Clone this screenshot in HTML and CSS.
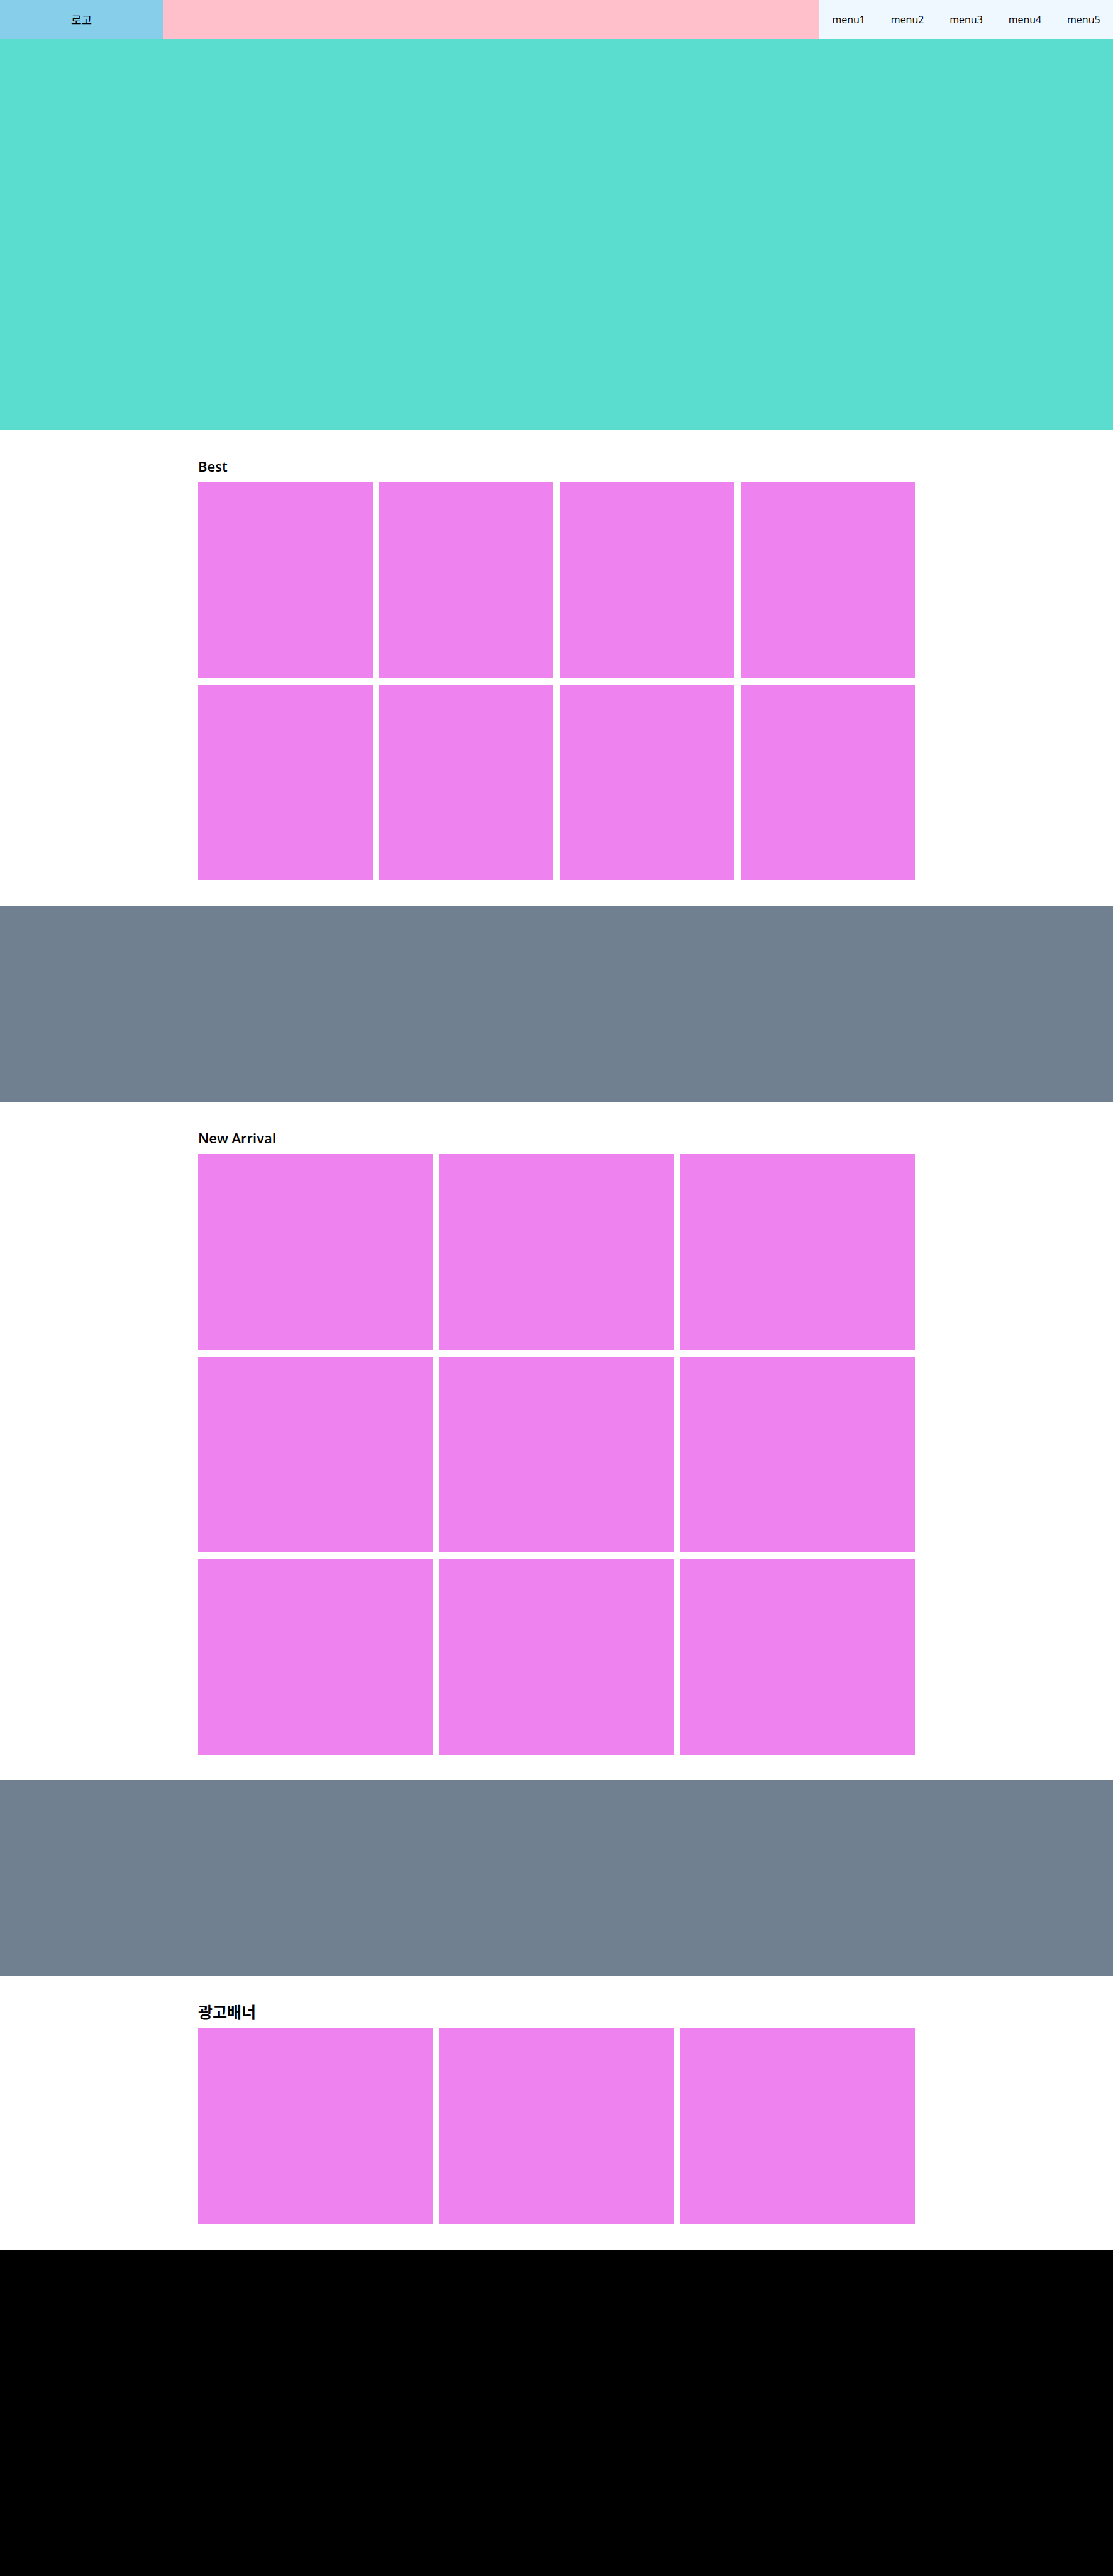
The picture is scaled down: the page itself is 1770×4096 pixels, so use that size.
FILE: index.html
```html
<!DOCTYPE html>
<html lang="ko">
<head>
<meta charset="utf-8">
<meta name="viewport" content="width=device-width, initial-scale=1">
<title>로고</title>
<link rel="stylesheet" href="styles.css">
</head>
<body>
<header class="header">
  <a class="logo" href="#">로고</a>
  <nav class="nav" lang="en">
    <a href="#">menu1</a>
    <a href="#">menu2</a>
    <a href="#">menu3</a>
    <a href="#">menu4</a>
    <a href="#">menu5</a>
  </nav>
</header>
<main>
  <div class="hero"></div>
  <section class="section">
    <h2 class="title" lang="en">Best</h2>
    <div class="grid grid-four">
      <div class="card"></div><div class="card"></div><div class="card"></div><div class="card"></div>
      <div class="card"></div><div class="card"></div><div class="card"></div><div class="card"></div>
    </div>
  </section>
  <div class="banner"></div>
  <section class="section">
    <h2 class="title" lang="en">New Arrival</h2>
    <div class="grid grid-three">
      <div class="card"></div><div class="card"></div><div class="card"></div>
      <div class="card"></div><div class="card"></div><div class="card"></div>
      <div class="card"></div><div class="card"></div><div class="card"></div>
    </div>
  </section>
  <div class="banner"></div>
  <section class="section">
    <h2 class="title title-ko">광고배너</h2>
    <div class="grid grid-three">
      <div class="card"></div><div class="card"></div><div class="card"></div>
    </div>
  </section>
</main>
<footer class="footer"></footer>
</body>
</html>
```
FILE: styles.css
```css
* {
  box-sizing: border-box;
}

body {
  margin: 0;
  background: #fff;
  color: #000;
  font-family: "Open Sans", "Noto Sans CJK KR", sans-serif;
  font-size: 16px;
}

a {
  color: inherit;
  text-decoration: none;
}

.header {
  display: flex;
  justify-content: space-between;
  height: 62px;
  background: pink;
}

.logo {
  display: flex;
  align-items: center;
  justify-content: center;
  width: 259px;
  background: skyblue;
  font-size: 18px;
}

.nav {
  display: flex;
  width: 467px;
  background: aliceblue;
}

.nav a {
  display: flex;
  flex: 1;
  align-items: center;
  justify-content: center;
}

.hero {
  height: 622px;
  background: #5adccf;
}

.section {
  max-width: 1140px;
  margin: 0 auto;
  padding: 41px 0;
}

.title {
  margin: 0 0 9px;
  font-size: 22px;
  font-weight: 600;
  line-height: 33px;
}

.title-ko {
  font-size: 25px;
  font-weight: 700;
}

.grid {
  display: grid;
  gap: 11px 10px;
}

.grid-four {
  grid-template-columns: repeat(4, 1fr);
}

.grid-three {
  grid-template-columns: repeat(3, 1fr);
}

.card {
  height: 311px;
  background: violet;
}

.banner {
  height: 311px;
  background: slategray;
}

.footer {
  height: 519px;
  background: #000;
}
```
